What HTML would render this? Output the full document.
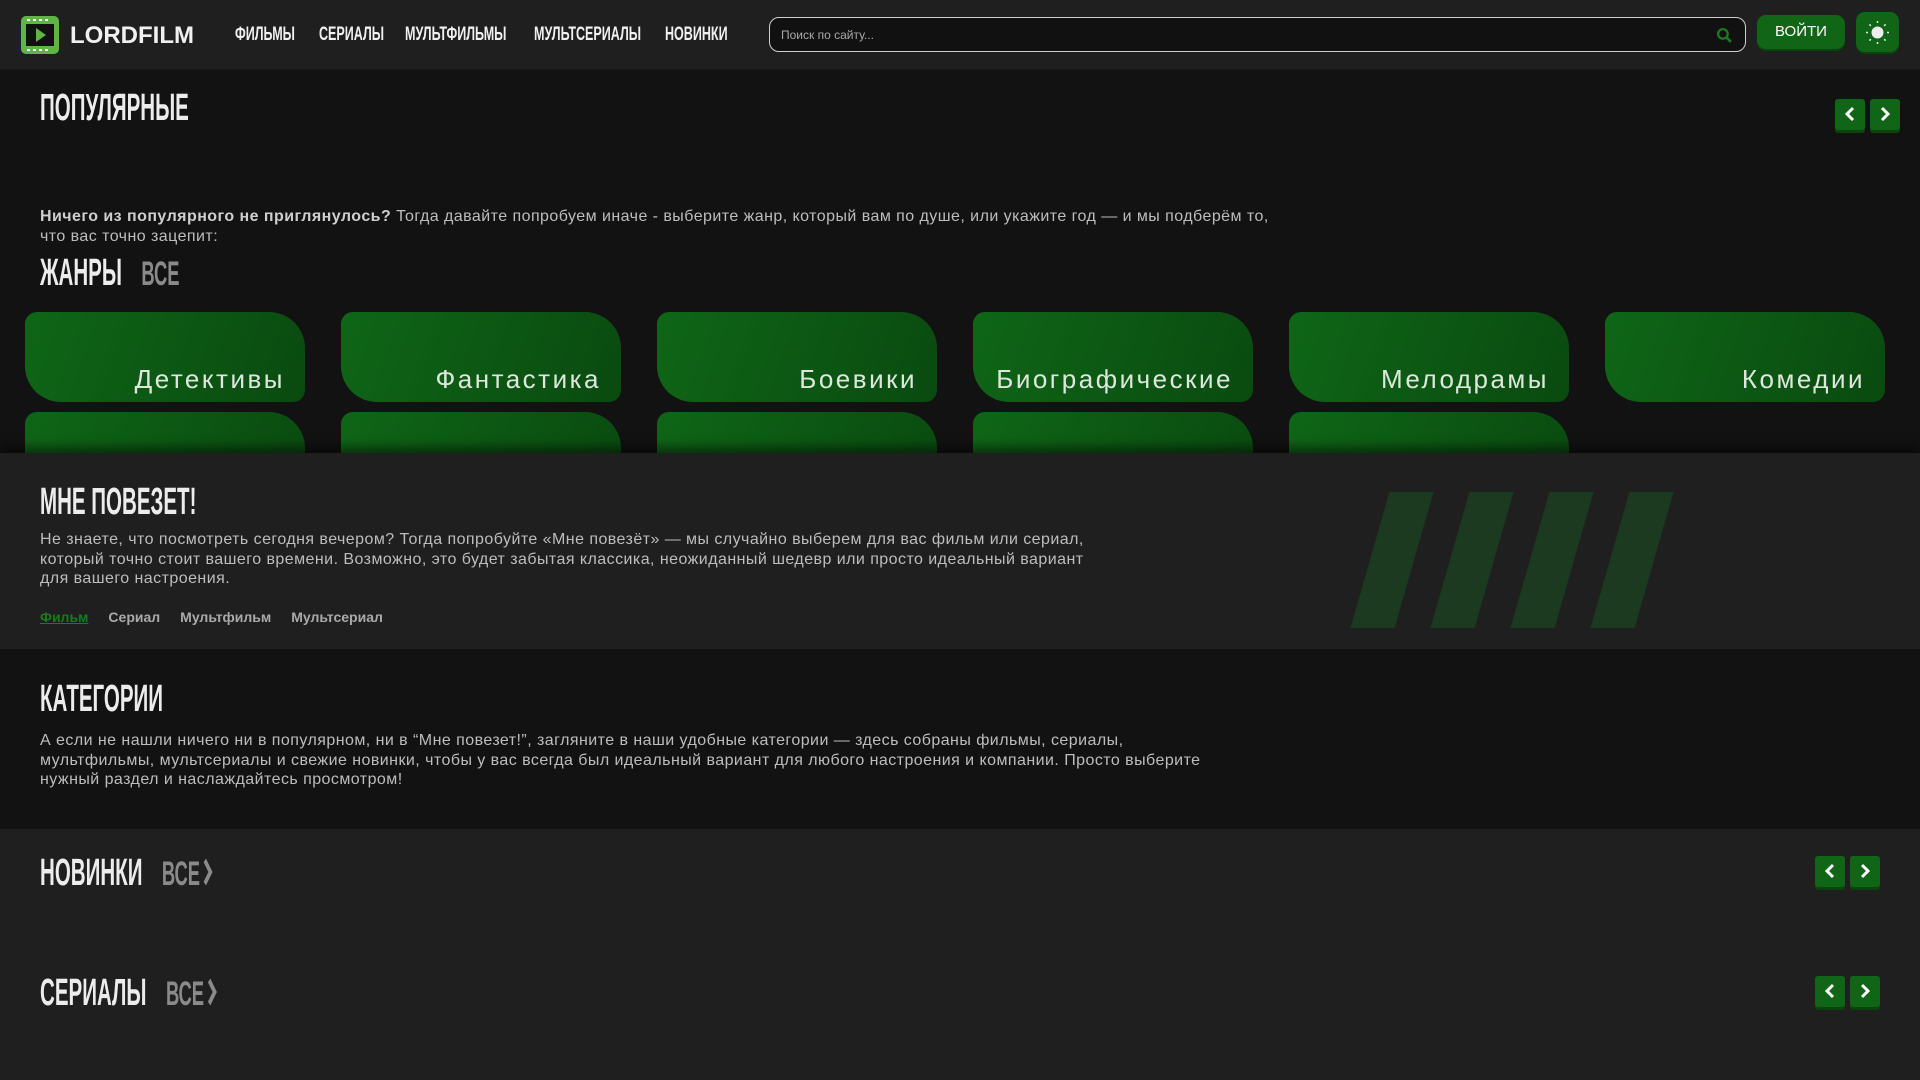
<!DOCTYPE html>
<html><head><meta charset="utf-8">
<style>
*{margin:0;padding:0;box-sizing:border-box}
body{width:1920px;height:1080px;overflow:hidden;background:#121212;font-family:"Liberation Sans",sans-serif;color:#bdbdbd;position:relative}
.abs{position:absolute}
.cond{font-weight:bold;transform-origin:0 0;white-space:nowrap}
header{position:absolute;left:0;top:0;width:1920px;height:70px;background:#1f1f1f;border-bottom:1px solid #181818}
.nav{top:24px;font-size:19px;color:#f0f0f0;transform:scaleX(0.66)}
.h{font-size:38px;color:#ececec;transform:scaleX(0.54)}
.p{font-size:16px;line-height:19.5px;color:#bdbdbd;letter-spacing:0.45px}
.arr{width:30px;height:31px;background:#106516;border-radius:3px;box-shadow:0 3px 0 #0a430e}
.arr svg{display:block;margin:7px auto}
.card{width:280px;height:90px;border-radius:12px 36px 12px 36px;background:linear-gradient(110deg,#0f6617,#0a4a10);color:#dde8dd;font-size:26px;letter-spacing:2.5px;text-align:right;padding:52px 20px 0 0}
.stripe{width:44px;height:136px;background:#1c3a1f;transform:skewX(-16deg)}
.all{color:#8a8a8a;margin-left:36px;font-size:34px}
</style></head><body>
<header>
<svg class="abs" style="left:21px;top:16px" width="38" height="38" viewBox="0 0 38 38"><rect width="38" height="38" rx="5" fill="#5fb544"/><rect x="5" y="8" width="28" height="22" fill="#111"/><g fill="#fff"><rect x="6" y="3" width="3" height="2"/><rect x="12" y="3" width="3" height="2"/><rect x="18" y="3" width="3" height="2"/><rect x="24" y="3" width="3" height="2"/><rect x="6" y="33" width="3" height="2"/><rect x="12" y="33" width="3" height="2"/><rect x="18" y="33" width="3" height="2"/><rect x="24" y="33" width="3" height="2"/></g><path d="M15 12 L25 19 L15 26Z" fill="#5fb544"/></svg>
<div class="abs" style="left:70px;top:22px;font-size:24px;color:#f0f0f0;font-weight:bold;letter-spacing:0">LORDFILM</div>
<div class="abs nav cond" style="left:235px">ФИЛЬМЫ</div>
<div class="abs nav cond" style="left:319px">СЕРИАЛЫ</div>
<div class="abs nav cond" style="left:405px">МУЛЬТФИЛЬМЫ</div>
<div class="abs nav cond" style="left:534px">МУЛЬТСЕРИАЛЫ</div>
<div class="abs nav cond" style="left:665px">НОВИНКИ</div>
<div class="abs" style="left:769px;top:17px;width:977px;height:35px;border:1px solid #cfcfcf;border-radius:10px;background:#111"><span style="position:absolute;left:11px;top:10px;font-size:12px;color:#aaa">Поиск по сайту...</span>
<svg style="position:absolute;right:12px;top:9px" width="17" height="17" viewBox="0 0 16 16"><circle cx="6.5" cy="6.5" r="4.5" stroke="#1a7a1f" stroke-width="2.2" fill="none"/><path d="M10 10 L14 14" stroke="#1a7a1f" stroke-width="2.5"/></svg></div>
<div class="abs" style="left:1757px;top:15px;width:88px;height:34px;border-radius:9px;background:#106516;box-shadow:0 2px 0 #0a430e;color:#fff;font-size:15px;text-align:center;line-height:34px">ВОЙТИ</div>
<div class="abs" style="left:1856px;top:12px;width:43px;height:40px;border-radius:9px;background:#106516;box-shadow:0 2px 0 #0a430e"><svg style="margin:9px 10px" width="23" height="23" viewBox="0 0 23 23"><circle cx="11.5" cy="11.5" r="6" fill="#eee"/><g stroke="#eee" stroke-width="1.5"><path d="M11.5 0v2M11.5 21v2M0 11.5h2M21 11.5h2M3.4 3.4l1.4 1.4M18.2 18.2l1.4 1.4M3.4 19.6l1.4-1.4M18.2 4.8l1.4-1.4"/></g></svg></div>
</header>

<div class="abs h cond" style="left:40px;top:87px">ПОПУЛЯРНЫЕ</div>
<div class="abs arr" style="left:1835px;top:99px"><svg width="14" height="16" viewBox="0 0 14 16"><path d="M10 2 L4 8 L10 14" stroke="#fff" stroke-width="3" fill="none"/></svg></div>
<div class="abs arr" style="left:1870px;top:99px"><svg width="14" height="16" viewBox="0 0 14 16"><path d="M4 2 L10 8 L4 14" stroke="#fff" stroke-width="3" fill="none"/></svg></div>

<div class="abs p" style="left:40px;top:207px;width:1250px"><b style="color:#cfcfcf;font-weight:600">Ничего из популярного не приглянулось?</b> Тогда давайте попробуем иначе - выберите жанр, который вам по душе, или укажите год — и мы подберём то, что вас точно зацепит:</div>
<div class="abs h cond" style="left:40px;top:252px">ЖАНРЫ<span class="all">ВСЕ</span></div>

<div class="abs card" style="left:25px;top:312px">Детективы</div>
<div class="abs card" style="left:341px;top:312px">Фантастика</div>
<div class="abs card" style="left:657px;top:312px">Боевики</div>
<div class="abs card" style="left:973px;top:312px">Биографические</div>
<div class="abs card" style="left:1289px;top:312px">Мелодрамы</div>
<div class="abs card" style="left:1605px;top:312px">Комедии</div>
<div class="abs card" style="left:25px;top:412px"></div>
<div class="abs card" style="left:341px;top:412px"></div>
<div class="abs card" style="left:657px;top:412px"></div>
<div class="abs card" style="left:973px;top:412px"></div>
<div class="abs card" style="left:1289px;top:412px"></div>

<div class="abs" style="left:0;top:453px;width:1920px;height:196px;background:#1f1f1f;box-shadow:0 -6px 10px rgba(0,0,0,.5)"></div>
<div class="abs stripe" style="left:1370px;top:492px"></div>
<div class="abs stripe" style="left:1450px;top:492px"></div>
<div class="abs stripe" style="left:1530px;top:492px"></div>
<div class="abs stripe" style="left:1610px;top:492px"></div>
<div class="abs h cond" style="left:40px;top:481px">МНЕ ПОВЕЗЕТ!</div>
<div class="abs p" style="left:40px;top:530px;width:1055px">Не знаете, что посмотреть сегодня вечером? Тогда попробуйте «Мне повезёт» — мы случайно выберем для вас фильм или сериал, который точно стоит вашего времени. Возможно, это будет забытая классика, неожиданный шедевр или просто идеальный вариант для вашего настроения.</div>
<div class="abs" style="left:40px;top:609px;font-size:14px;font-weight:bold;color:#aaa"><span style="color:#1a7a1f;text-decoration:underline">Фильм</span><span style="margin-left:20px">Сериал</span><span style="margin-left:20px">Мультфильм</span><span style="margin-left:20px">Мультсериал</span></div>

<div class="abs h cond" style="left:40px;top:678px">КАТЕГОРИИ</div>
<div class="abs p" style="left:40px;top:731px;width:1185px">А если не нашли ничего ни в популярном, ни в “Мне повезет!”, загляните в наши удобные категории — здесь собраны фильмы, сериалы, мультфильмы, мультсериалы и свежие новинки, чтобы у вас всегда был идеальный вариант для любого настроения и компании. Просто выберите нужный раздел и наслаждайтесь просмотром!</div>

<div class="abs" style="left:0;top:829px;width:1920px;height:251px;background:#1f1f1f"></div>
<div class="abs h cond" style="left:40px;top:852px">НОВИНКИ<span class="all">ВСЕ</span><svg width="26" height="30" viewBox="0 0 16 26" style="vertical-align:-2px;margin-left:2px"><path d="M3 3 L12 13 L3 23" stroke="#8a8a8a" stroke-width="5" fill="none"/></svg></div>
<div class="abs arr" style="left:1815px;top:856px"><svg width="14" height="16" viewBox="0 0 14 16"><path d="M10 2 L4 8 L10 14" stroke="#fff" stroke-width="3" fill="none"/></svg></div>
<div class="abs arr" style="left:1850px;top:856px"><svg width="14" height="16" viewBox="0 0 14 16"><path d="M4 2 L10 8 L4 14" stroke="#fff" stroke-width="3" fill="none"/></svg></div>
<div class="abs h cond" style="left:40px;top:972px">СЕРИАЛЫ<span class="all">ВСЕ</span><svg width="26" height="30" viewBox="0 0 16 26" style="vertical-align:-2px;margin-left:2px"><path d="M3 3 L12 13 L3 23" stroke="#8a8a8a" stroke-width="5" fill="none"/></svg></div>
<div class="abs arr" style="left:1815px;top:976px"><svg width="14" height="16" viewBox="0 0 14 16"><path d="M10 2 L4 8 L10 14" stroke="#fff" stroke-width="3" fill="none"/></svg></div>
<div class="abs arr" style="left:1850px;top:976px"><svg width="14" height="16" viewBox="0 0 14 16"><path d="M4 2 L10 8 L4 14" stroke="#fff" stroke-width="3" fill="none"/></svg></div>
</body></html>
